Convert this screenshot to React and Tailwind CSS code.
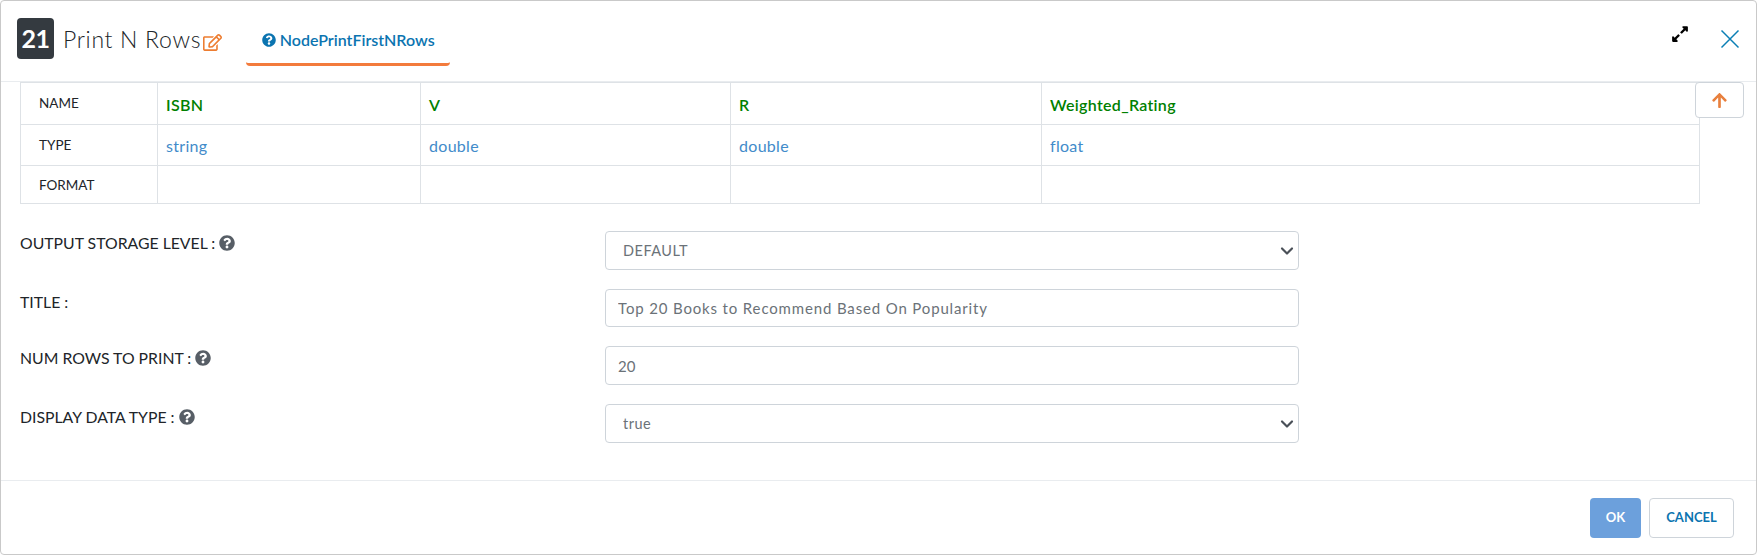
import { FaRegEdit, FaQuestionCircle, FaArrowUp, FaExpandAlt } from "react-icons/fa";
import { ChevronDown } from "lucide-react";

const columns = [
  { name: "ISBN", type: "string", width: "w-[263px]" },
  { name: "V", type: "double", width: "w-[310px]" },
  { name: "R", type: "double", width: "w-[311px]" },
  { name: "Weighted_Rating", type: "float", width: "" },
];

const rowLabel = "w-[137px] border border-[#dee2e6] pl-[18px] text-left align-middle text-[13.5px] font-normal text-[#212529]";
const cell = "border border-[#dee2e6] pl-[8px] align-middle";

const FieldLabel = ({ text, help }) => (
  <div className="flex items-center gap-1 text-[15.8px] leading-5 text-[#212529]">
    <span>{text}</span>
    {help && <FaQuestionCircle className="text-[16px] text-[#575e66]" />}
  </div>
);

const fieldBox = "h-full w-full rounded border border-[#ced4da] bg-white text-[#6b7278] outline-none";

const SelectField = ({ value }) => (
  <div className="relative h-[39px]">
    <select defaultValue={value} className={`${fieldBox} appearance-none pl-[17px] text-[14.5px] tracking-[0.5px]`}>
      <option>{value}</option>
    </select>
    <ChevronDown className="pointer-events-none absolute right-[2px] top-[10px] size-5 text-[#4a5058]" strokeWidth={2.6} />
  </div>
);

export default function App() {
  return (
    <div className="relative flex h-[555px] w-[1757px] flex-col overflow-hidden rounded border border-[#c9c9c9] bg-white font-['Lato',sans-serif]">
      <header className="flex h-[81px] shrink-0 border-b border-[#e9ecef] pl-4 pr-[16px]">
        <div className="flex h-[62px] items-start pt-[17px]">
          <span className="flex h-[41px] w-[37px] items-center justify-center rounded bg-[#343a40] text-[25px] font-bold tracking-tight text-white">21</span>
          <span className="ml-[9px] mt-[5px] text-[23px] font-light leading-8 tracking-[0.7px] text-[#212529]">Print N Rows</span>
          <FaRegEdit className="ml-[2px] mt-[15px] text-[19px] text-[#ed7d31]" />
        </div>
        <div className="ml-[24px] flex h-[65px] w-[204px] items-center justify-center gap-[4px] rounded-b border-b-[3px] border-[#f37b3c] pt-[15px] text-[16px] font-semibold text-[#0b74b0]">
          <FaQuestionCircle className="text-[14px]" />
          <span>NodePrintFirstNRows</span>
        </div>
        <div className="ml-auto flex items-start">
          <FaExpandAlt className="mt-6 text-[18px] text-black" />
          <svg className="ml-[31px] mt-[28px] size-[20px] text-[#0b7fb5]" viewBox="0 0 20 20" fill="none" stroke="currentColor" strokeWidth="1.5">
            <path d="M1.5 1.5 18.5 18.5M18.5 1.5 1.5 18.5" />
          </svg>
        </div>
      </header>

      <main className="relative flex-1 pl-[19px]">
        <table className="w-[1680px] table-fixed border-collapse">
          <tbody>
            <tr className="h-[42px]">
              <th className={rowLabel}>NAME</th>
              {columns.map((c) => (
                <td key={c.name} className={`${cell} ${c.width} pt-[3px] text-[16px] font-semibold tracking-[0.3px] text-[#008000]`}>{c.name}</td>
              ))}
            </tr>
            <tr className="h-[41px]">
              <th className={rowLabel}>TYPE</th>
              {columns.map((c) => (
                <td key={c.name} className={`${cell} pt-[1px] text-[16px] tracking-[0.3px] text-[#428bca]`}>{c.type}</td>
              ))}
            </tr>
            <tr className="h-[38px]">
              <th className={`${rowLabel} pt-[2px]`}>FORMAT</th>
              {columns.map((c) => (
                <td key={c.name} className={cell}></td>
              ))}
            </tr>
          </tbody>
        </table>

        <button className="absolute right-[12px] top-0 flex h-[36px] w-[49px] items-center justify-center rounded border border-[#ced4da] bg-white text-[17px] text-[#e8803e]">
          <FaArrowUp />
        </button>

        <div className="mt-[27px] grid w-[1280px] grid-cols-[585px_694px] gap-y-[19px]">
          <div className="pt-[2px]"><FieldLabel text="OUTPUT STORAGE LEVEL :" help /></div>
          <SelectField value="DEFAULT" />
          <div className="pt-[3px]"><FieldLabel text="TITLE :" /></div>
          <div className="h-[38px]">
            <input readOnly value="Top 20 Books to Recommend Based On Popularity" className={`${fieldBox} pl-3 text-[15px] tracking-[0.85px]`} />
          </div>
          <div className="pt-[2px]"><FieldLabel text="NUM ROWS TO PRINT :" help /></div>
          <div className="h-[39px]">
            <input readOnly value="20" className={`${fieldBox} pl-3 text-[15px]`} />
          </div>
          <div className="pt-[3px]"><FieldLabel text="DISPLAY DATA TYPE :" help /></div>
          <SelectField value="true" />
        </div>
      </main>

      <footer className="flex h-[74px] shrink-0 items-start justify-end gap-2 border-t border-[#e9ecef] pr-[22px] pt-[17px]">
        <button className="h-10 w-[51px] rounded bg-[#6ca0dc] text-[13px] font-bold text-white">OK</button>
        <button className="h-10 w-[85px] rounded border border-[#ced4da] bg-white text-[13px] font-bold text-[#0b74b0]">CANCEL</button>
      </footer>
    </div>
  );
}
